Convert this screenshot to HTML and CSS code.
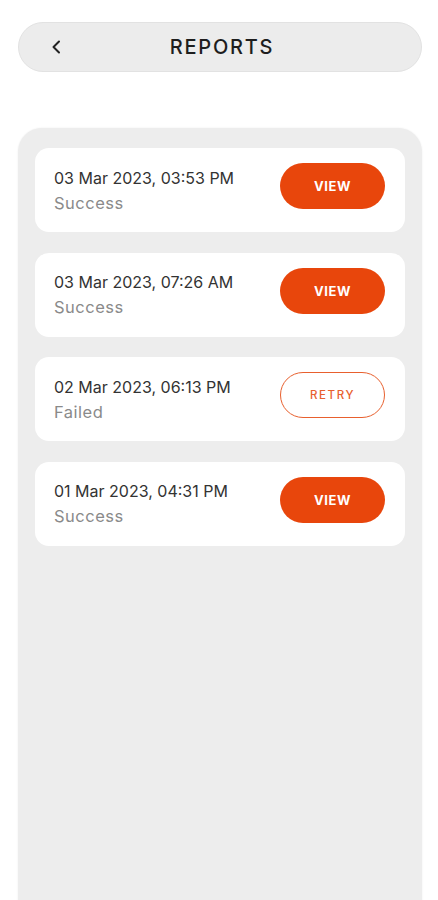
FILE: index.html
```html
<!DOCTYPE html>
<html lang="en">
<head>
  <meta charset="UTF-8" />
  <meta name="viewport" content="width=device-width, initial-scale=1.0"/>
  <title>Reports</title>
  <link rel="stylesheet" href="styles.css">
</head>
<body>

  <!-- Top bar -->
  <header class="top-bar">
    <button class="back-btn" aria-label="Back">
      <svg width="12" height="14" viewBox="0 0 12 14"><path d="M8 1.5 L2.5 7 L8 12.5" fill="none" stroke="#222" stroke-width="2" stroke-linecap="round" stroke-linejoin="round"/></svg>
    </button>
    <h1>REPORTS</h1>
  </header>

  <!-- Report list -->
  <section class="panel">
    <div class="report-card">
      <div class="report-info">
        <p class="report-date">03 Mar 2023, 03:53 PM</p>
        <p class="report-status">Success</p>
      </div>
      <button class="action-btn">VIEW</button>
    </div>

    <div class="report-card">
      <div class="report-info">
        <p class="report-date">03 Mar 2023, 07:26 AM</p>
        <p class="report-status">Success</p>
      </div>
      <button class="action-btn">VIEW</button>
    </div>

    <div class="report-card">
      <div class="report-info">
        <p class="report-date">02 Mar 2023, 06:13 PM</p>
        <p class="report-status">Failed</p>
      </div>
      <button class="action-btn outline">RETRY</button>
    </div>

    <div class="report-card">
      <div class="report-info">
        <p class="report-date">01 Mar 2023, 04:31 PM</p>
        <p class="report-status">Success</p>
      </div>
      <button class="action-btn">VIEW</button>
    </div>
  </section>

</body>
</html>
```

FILE: styles.css
```css
body {
  margin: 0;
  font-family: 'Inter', 'Noto Sans', sans-serif;
  background-color: #fff;
  color: #2a2a2a;
  height: 900px;
  overflow: hidden;
}

.top-bar {
  position: relative;
  margin: 22px 16px 0 18px;
  height: 50px;
  box-sizing: border-box;
  border-radius: 25px;
  background-color: #ececec;
  border: 1px solid #e2e2e2;
  display: flex;
  align-items: center;
  justify-content: center;
}

.top-bar h1 {
  margin: 0 0 0 4px;
  font-size: 20px;
  font-weight: 500;
  letter-spacing: 1.8px;
  color: #1e1e1e;
}

.back-btn {
  position: absolute;
  left: 32px;
  top: 50%;
  transform: translateY(-50%);
  background: none;
  border: none;
  padding: 0;
  display: flex;
  cursor: pointer;
}

.panel {
  margin: 56px 16px 0 18px;
  height: 800px;
  background-color: #ededed;
  border-radius: 24px 24px 0 0;
  padding: 20px 17px;
  box-sizing: border-box;
  box-shadow: 0 0 2px rgba(0, 0, 0, 0.08);
  display: flex;
  flex-direction: column;
  gap: 20.5px;
}

.report-card {
  background-color: #fff;
  border-radius: 14px;
  height: 84px;
  padding: 0 20px 0 19px;
  display: flex;
  align-items: center;
  justify-content: space-between;
}

.report-info {
  margin-top: 0;
}

.report-info p {
  margin: 0;
}

.report-date {
  font-size: 16px;
  color: #333;
}

.report-status {
  margin-top: 5px !important;
  font-size: 16.5px;
  color: #8a8a8a;
  letter-spacing: 0.5px;
}

.action-btn {
  width: 105px;
  height: 46px;
  margin-bottom: 8px;
  border-radius: 23px;
  border: none;
  background-color: #e8460c;
  color: #fff;
  font-family: inherit;
  font-size: 13px;
  font-weight: 700;
  letter-spacing: 0.6px;
  cursor: pointer;
}

.action-btn.outline {
  background-color: #fff;
  border: 1.5px solid #e8602e;
  color: #e8602e;
  font-weight: 500;
  font-size: 11.5px;
  letter-spacing: 1.6px;
}
```
